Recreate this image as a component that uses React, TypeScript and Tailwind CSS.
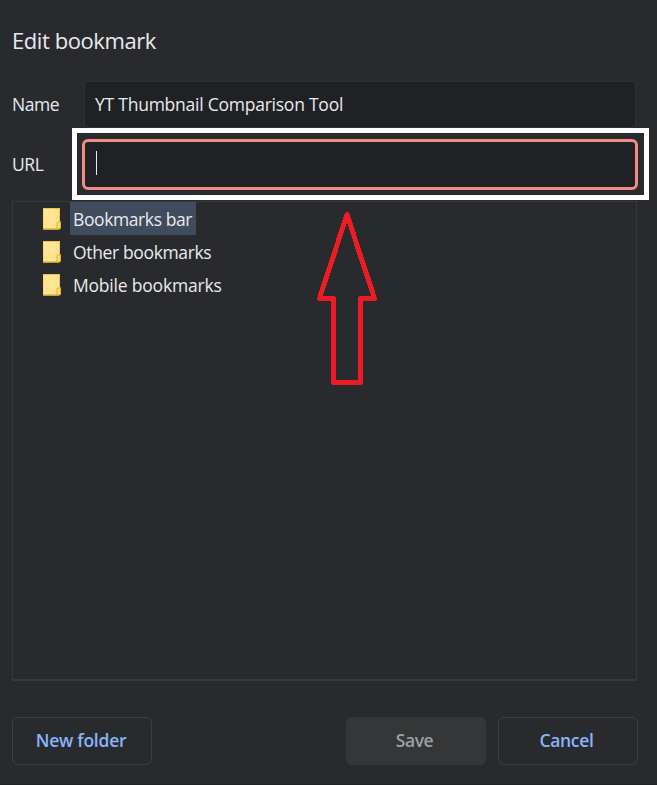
import React from "react";

function FolderIcon() {
  return (
    <svg className="h-[22px] w-[18px] shrink-0" viewBox="0 0 18 22">
      <path d="M0 0H17V13.5H18V20L16.5 21.5H0Z" fill="#ffe491" />
      <path d="M0 0.5H16.5V14" fill="none" stroke="#e9c64f" />
      <path d="M0.500 1V21" fill="none" stroke="#f8d976" />
      <path d="M0 21H15" fill="none" stroke="#dcae24" strokeWidth="1.2" />
      <path d="M14 20.500V15Q14 14 15 14H17.500V19.500L16 21Z" fill="#ffdc72" stroke="#e0b32c" />
    </svg>
  );
}

function TreeRow({ label, selected, tracking }: { label: string; selected?: boolean; tracking: string }) {
  return (
    <div className="flex h-[33px] items-center">
      <FolderIcon />
      <span
        className={`ml-[9px] flex h-[33px] items-center pr-1 pl-[3px] whitespace-nowrap ${tracking} ${selected ? "bg-[#414b5e]" : ""}`}
      >
        {label}
      </span>
    </div>
  );
}

export default function App() {
  return (
    <div className="relative flex h-[785px] w-[657px] flex-col overflow-hidden border-b border-[#202124] bg-[#292a2d] pl-3 font-['Open_Sans','Noto_Sans',sans-serif] text-[17.5px] leading-6 text-[#e8eaed]">
      <h1 className="mt-6 h-8 text-[22px] leading-8 tracking-[-0.42px] whitespace-nowrap">Edit bookmark</h1>

      <div className="mt-[25px] flex h-[47px] items-center">
        <label className="w-[72px] pb-0.5 tracking-[-0.45px]">Name</label>
        <div className="flex h-[47px] w-[552px] items-center rounded-[3px] border border-[#303134] bg-[#202124] pb-0.5 pl-[10px] tracking-[-0.24px] whitespace-nowrap">
          YT Thumbnail Comparison Tool
        </div>
      </div>

      <div className="flex h-[72px] items-center">
        <label className="w-[60px] tracking-[-0.4px]">URL</label>
        <div className="h-[72px] w-[577px] border-[5px] border-white px-[5px] pt-[6px]">
          <div className="h-[51px] w-[556px] rounded-[6px] border-[3px] border-[#f28b82] bg-[#202124] pt-[9px] pl-[11px]">
            <div className="h-6 w-px bg-[#e8eaed]" />
          </div>
        </div>
      </div>

      <div className="mt-px h-[480px] w-[625px] border border-b-2 border-[#3c4043]/70 pl-[30px]">
        <TreeRow label="Bookmarks bar" selected tracking="tracking-[-0.4px]" />
        <TreeRow label="Other bookmarks" tracking="tracking-[-0.36px]" />
        <TreeRow label="Mobile bookmarks" tracking="tracking-[-0.2px]" />
      </div>

      <div className="mt-9 flex w-[626px] font-semibold">
        <button className="h-12 w-[140px] rounded-[6px] border border-[#3c4043] pr-0.5 pb-0.5 tracking-[-0.25px] text-[#8ab4f8]">
          New folder
        </button>
        <button className="ml-auto h-12 w-[140px] rounded-[6px] bg-[#353637] pr-[3px] pb-0.5 tracking-[-0.4px] text-[#9aa0a6]">
          Save
        </button>
        <button className="ml-3 h-12 w-[140px] rounded-[6px] border border-[#3c4043] pr-[3px] pb-0.5 tracking-[-0.3px] text-[#8ab4f8]">
          Cancel
        </button>
      </div>

      <svg className="absolute top-[205px] left-[310px] h-[190px] w-[80px]" viewBox="310 205 80 190" fill="none">
        <path
          d="M347 214.500L319.500 298.500H333.500V382.500H360.500V298.500H374.500Z"
          stroke="#ed1c24"
          strokeWidth="5"
          strokeLinejoin="round"
          shapeRendering="crispEdges"
        />
      </svg>
    </div>
  );
}
